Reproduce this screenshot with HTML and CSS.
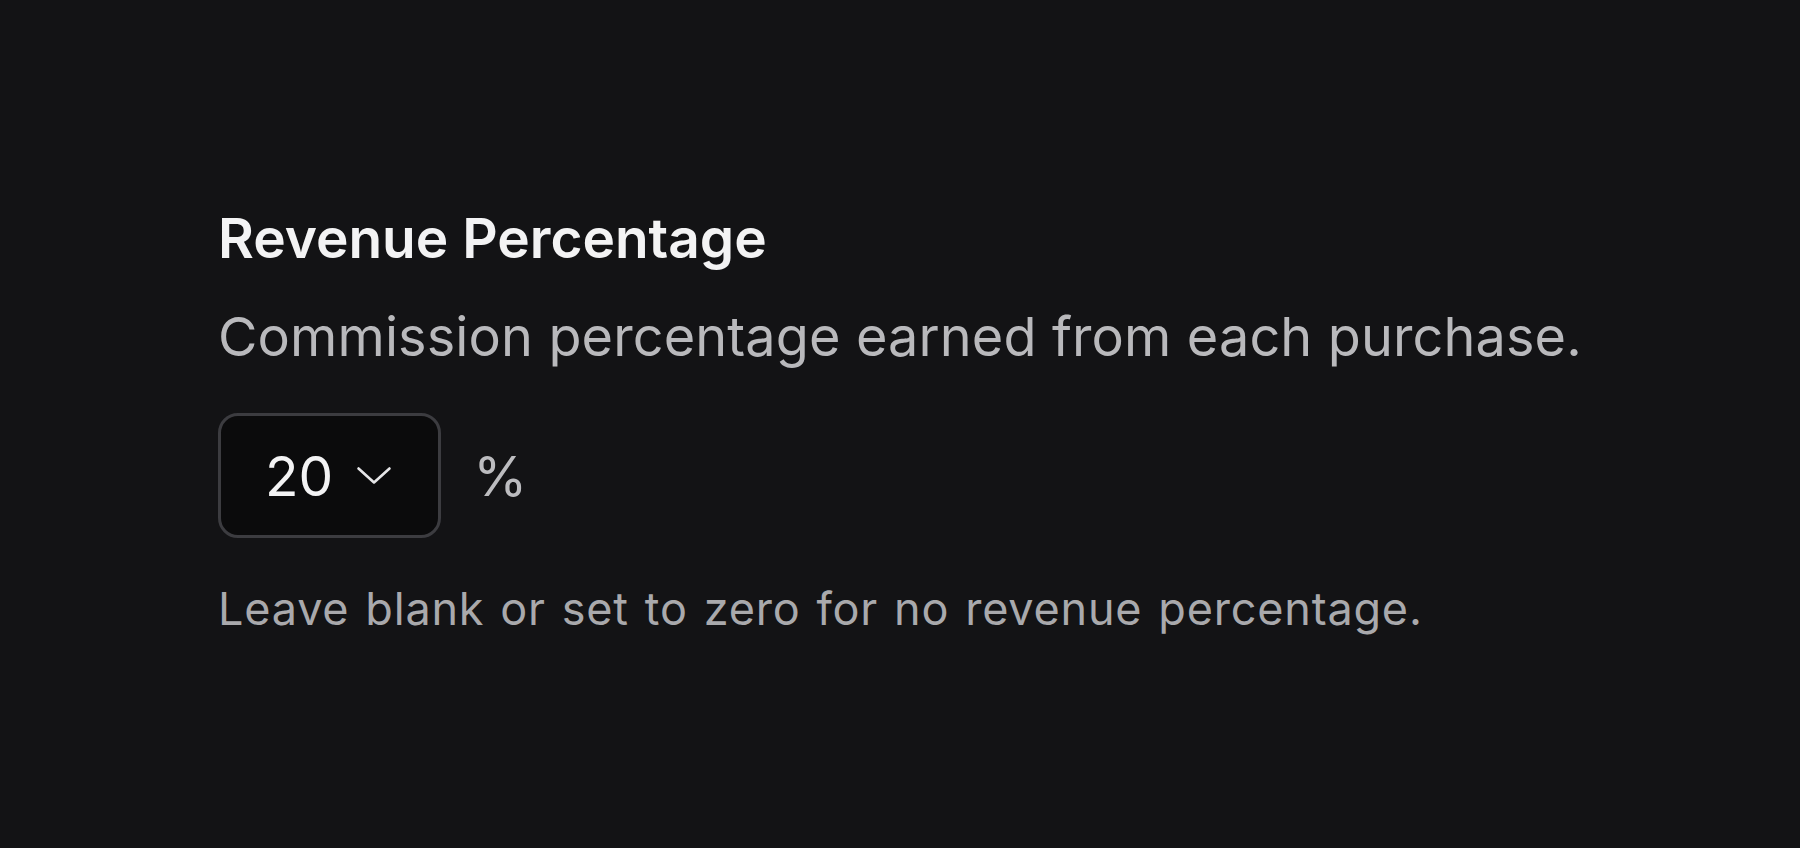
FILE: index.html
```html
<!DOCTYPE html>
<html lang="en">
  <head>
    <meta charset="UTF-8" />
    <meta name="viewport" content="width=device-width, initial-scale=1.0" />
    <title>Revenue Percentage</title>
    <link rel="stylesheet" href="styles.css">
  </head>

  <body>
    <div class="Setting">
      <h2 class="title">Revenue Percentage</h2>
      <p class="desc">Commission percentage earned from each purchase.</p>

      <div class="row">
        <button class="select" id="percentSelect">
          <span class="value">20</span>
          <svg class="chevron" width="36" height="19" viewBox="0 0 36 19" fill="none">
            <path d="M2.5 2.5 L18 16.5 L33.5 2.5" stroke="#e6e6e8" stroke-width="2.6" stroke-linecap="round" stroke-linejoin="round" />
          </svg>
        </button>
        <span class="unit">%</span>
      </div>

      <p class="hint">Leave blank or set to zero for no revenue percentage.</p>
    </div>
  </body>
</html>
```

FILE: styles.css
```css
html,
body {
  margin: 0;
  height: 100%;
  background-color: #131315;
}

.Setting {
  padding: 205px 0 0 218px;
  font-family: "Inter", "Noto Sans", sans-serif;
}

.title {
  margin: 0;
  font-size: 55px;
  line-height: 66px;
  font-weight: 600;
  color: #f3f3f4;
}

.desc {
  margin: 33px 0 0;
  font-size: 54px;
  line-height: 66px;
  font-weight: 400;
  letter-spacing: 0.12px;
  color: #b9b9bc;
}

.row {
  display: flex;
  align-items: center;
  gap: 32px;
  margin-top: 43px;
}

.select {
  display: flex;
  align-items: center;
  gap: 23px;
  box-sizing: border-box;
  height: 125px;
  padding: 0 46px 0 44px;
  border: 3px solid #3c3c40;
  border-radius: 20px;
  background-color: #0b0b0c;
  font-family: inherit;
  cursor: pointer;
}

.select .value {
  font-size: 55px;
  color: #f3f3f4;
}

.unit {
  font-size: 55px;
  color: #bcbcbf;
}

.hint {
  margin: 44px 0 0;
  font-size: 45px;
  line-height: 54px;
  letter-spacing: 0.8px;
  word-spacing: 2.5px;
  color: #a9a9ac;
}
```
